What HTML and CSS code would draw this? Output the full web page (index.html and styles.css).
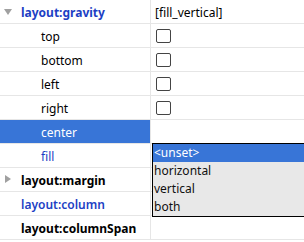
FILE: index.html
```html
<!DOCTYPE html>
<html lang="en">
<head>
    <meta charset="UTF-8">
    <title>Properties</title>
    <link rel="stylesheet" href="styles.css">
</head>
<body>
    <div class="props">
        <div class="row">
            <div class="name group"><span class="tri down"></span><span class="blue bold">layout:gravity</span></div>
            <div class="value">[fill_vertical]</div>
        </div>
        <div class="row">
            <div class="name sub">top</div>
            <div class="value"><span class="check"></span></div>
        </div>
        <div class="row">
            <div class="name sub">bottom</div>
            <div class="value"><span class="check"></span></div>
        </div>
        <div class="row">
            <div class="name sub">left</div>
            <div class="value"><span class="check"></span></div>
        </div>
        <div class="row">
            <div class="name sub">right</div>
            <div class="value"><span class="check"></span></div>
        </div>
        <div class="row">
            <div class="name sub selected">center</div>
            <div class="value"></div>
        </div>
        <div class="row">
            <div class="name sub blue">fill</div>
            <div class="value"></div>
        </div>
        <div class="row">
            <div class="name group"><span class="tri right"></span><span class="bold">layout:margin</span></div>
            <div class="value"></div>
        </div>
        <div class="row">
            <div class="name group"><span class="blue semi">layout:column</span></div>
            <div class="value"></div>
        </div>
        <div class="row">
            <div class="name group"><span class="bold">layout:columnSpan</span></div>
            <div class="value"></div>
        </div>

        <!-- dropdown list for the fill row -->
        <ul class="popup">
            <li class="active">&lt;unset&gt;</li>
            <li>horizontal</li>
            <li>vertical</li>
            <li>both</li>
        </ul>
    </div>
</body>
</html>
```

FILE: styles.css
```css
body {
    margin: 0;
    background: #fff;
    font-family: "Noto Sans", "DejaVu Sans", sans-serif;
    font-size: 12px;
    color: #000;
}
.props {
    position: relative;
    width: 304px;
}
.row {
    display: grid;
    grid-template-columns: 151px 1fr;
    height: 24px;
    border-bottom: 1px solid #e6e6e6;
    box-sizing: border-box;
}
.name {
    display: flex;
    align-items: center;
    padding-top: 1px;
    border-right: 1px solid #e6e6e6;
    white-space: nowrap;
}
.name.group {
    padding-left: 21px;
    position: relative;
}
.name.sub {
    padding-left: 41px;
}
.value {
    display: flex;
    align-items: center;
    padding-top: 1px;
    padding-left: 4px;
}
.blue {
    color: #1d3fc4;
}
.bold {
    font-weight: bold;
}
.semi {
    font-weight: 600;
}
.selected {
    background: #3875d7;
    color: #fff;
}
.tri {
    position: absolute;
    left: 4px;
    width: 0;
    height: 0;
}
.tri.down {
    top: 9px;
    border-left: 4px solid transparent;
    border-right: 4px solid transparent;
    border-top: 6px solid #a0a0a0;
}
.tri.right {
    left: 5px;
    top: 7px;
    border-top: 4px solid transparent;
    border-bottom: 4px solid transparent;
    border-left: 6px solid #a0a0a0;
}
.check {
    width: 13px;
    height: 12px;
    border: 1px solid #444;
    border-radius: 2px;
    margin-left: 1px;
    margin-bottom: 1px;
}
.popup {
    position: absolute;
    left: 152px;
    top: 143px;
    width: 160px;
    margin: 0;
    padding: 0;
    list-style: none;
    background: #e8e8e8;
    border: 1px solid #000;
}
.popup li {
    height: 18px;
    line-height: 18px;
    padding-left: 1px;
    color: #101010;
}
.popup li.active {
    background: #3875d7;
    color: #fff;
}
```
